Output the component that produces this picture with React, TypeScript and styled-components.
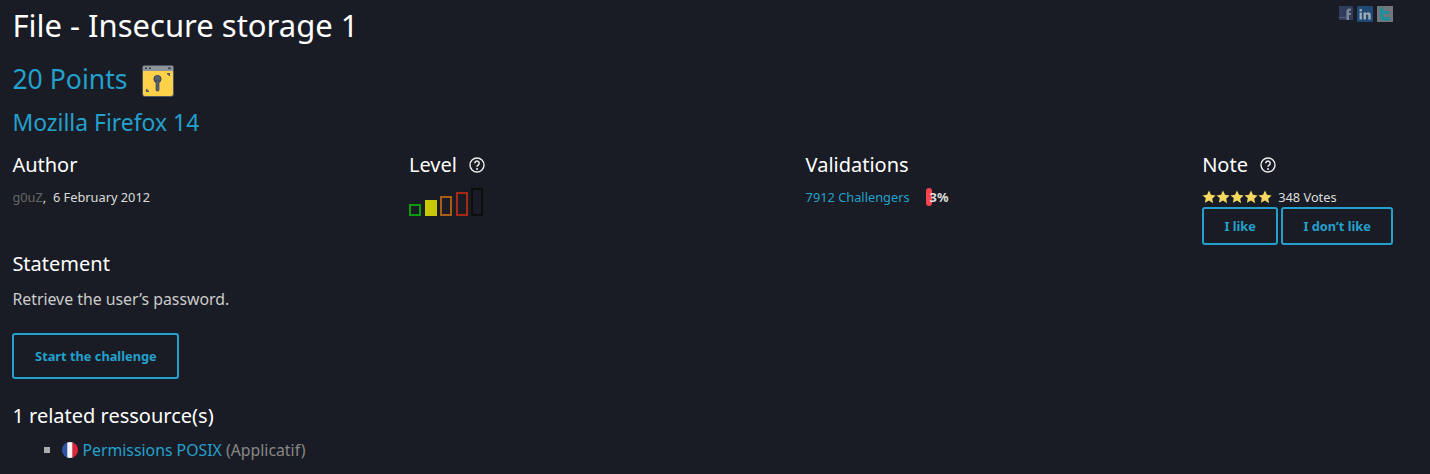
import styled, { createGlobalStyle } from "styled-components";

const GlobalStyle = createGlobalStyle`
  html, body {
    margin: 0;
    padding: 0;
    background: #191c24;
    color: #ddd;
    font-family: "Noto Sans", "Open Sans", sans-serif;
  }
`;

const HelpIcon = () => (
  <Help viewBox="0 0 16 16">
    <circle cx="8" cy="8" r="7" fill="none" stroke="#eee" strokeWidth="1.4" />
    <path d="M5.8 6.3a2.2 2.2 0 1 1 3.4 1.8c-.8.5-1.200.9-1.200 1.700" fill="none" stroke="#eee" strokeWidth="1.500" />
    <circle cx="8" cy="11.900" r="1" fill="#eee" />
  </Help>
);

const KeyBox = () => (
  <KeySvg width="32" height="32" viewBox="0 0 32 32">
    <rect x="0.5" y="0.5" width="31" height="31" rx="2.5" fill="#ffd04a" stroke="#4b5563" />
    <rect x="1" y="1" width="30" height="5" fill="#8d929b" />
    <rect x="3" y="2.5" width="2" height="1.5" fill="#3d4450" />
    <rect x="7" y="2.5" width="2" height="1.5" fill="#3d4450" />
    <rect x="26" y="2.5" width="3" height="1.5" fill="#3d4450" />
    <circle cx="15.5" cy="14" r="3.6" fill="#566274" stroke="#39414e" />
    <rect x="14" y="15" width="3" height="11" rx="1" fill="#566274" stroke="#39414e" strokeWidth=".7" />
    <path d="M25 8h3v3h-1.500V9.500H25z" fill="#4b5563" />
    <path d="M4 24h1.500v1.500H7V27H4z" fill="#4b5563" />
  </KeySvg>
);

const Flag = () => (
  <svg width="16" height="16" viewBox="0 0 16 16">
    <clipPath id="flag">
      <circle cx="8" cy="8" r="8" />
    </clipPath>
    <g clipPath="url(#flag)">
      <rect width="6" height="16" fill="#2f55a4" />
      <rect x="5.300" width="5.400" height="16" fill="#f4f4f4" />
      <rect x="10.500" width="5.500" height="16" fill="#e0243c" />
    </g>
  </svg>
);

const Star = () => (
  <svg width="14" height="14" viewBox="0 0 24 24">
    <path d="M12 1l3.400 7.300 7.900 1-5.800 5.500 1.500 7.900L12 18l-7 3.700 1.500-7.900L.7 9.300l7.900-1z" fill="#f5d85f" />
  </svg>
);

const FacebookMark = () => (
  <svg width="14" height="14" viewBox="0 0 14 14">
    <rect width="14" height="14" fill="#2f3c5e" />
    <path d="M7.500 14V5.500c0-2 1-3 3-3h1.500v2h-1c-.8 0-1 .3-1 1V7H12v2H10v5z" fill="#7f8795" />
    <rect y="11" width="7" height="1" fill="#56607a" />
  </svg>
);

const LinkedinMark = () => (
  <svg width="16" height="16" viewBox="0 0 16 16">
    <rect width="16" height="16" rx="1" fill="#1f4a75" />
    <rect x="2.500" y="3" width="2.400" height="2.400" fill="#9fa9b4" />
    <rect x="2.500" y="6.500" width="2.400" height="7" fill="#9fa9b4" />
    <path d="M6.500 6.500H9v1c.5-.8 1.300-1.200 2.200-1.200 1.700 0 2.500 1 2.500 2.900v4.300h-2.400V9.800c0-1-.4-1.400-1.100-1.400S9 8.900 9 9.800v3.700H6.500z" fill="#9fa9b4" />
  </svg>
);

const TwitterMark = () => (
  <svg width="16" height="16" viewBox="0 0 16 16">
    <rect width="16" height="16" fill="#70767a" />
    <path d="M3 1.500h3.200v3.500H12v3H6.200v1.500c0 1 .5 1.500 1.500 1.500H13v3.500H6.500C4 14 3 12.500 3 10.500z" fill="#1e8d9f" />
  </svg>
);

const App = () => {
  return (
    <>
      <GlobalStyle />
      <Page>
        <Share>
          <FacebookMark />
          <LinkedinMark />
          <TwitterMark />
        </Share>
        <Title>File - Insecure storage 1</Title>
        <Points>
          20 Points
          <KeyBox />
        </Points>
        <Platform>Mozilla Firefox 14</Platform>

        <Columns>
          <Column>
            <Heading>Author</Heading>
            <Meta>
              <Muted>g0uZ</Muted>,&nbsp; 6 February 2012
            </Meta>
          </Column>
          <Column>
            <Heading>
              Level <HelpIcon />
            </Heading>
            <Bars>
              <Bar $h={12} $color="#0a9a0a" />
              <Bar $h={16} $color="#c8c808" $fill />
              <Bar $h={20} $color="#a85c14" />
              <Bar $h={24} $color="#a82a14" />
              <Bar $h={28} $color="#0d0d0d" />
            </Bars>
          </Column>
          <Column>
            <Heading>Validations</Heading>
            <Meta>
              <Link>7912 Challengers</Link>
              <Pill />
              <Percent>3%</Percent>
            </Meta>
          </Column>
          <Column>
            <Heading>
              Note <HelpIcon />
            </Heading>
            <Votes>
              <Stars>
                <Star />
                <Star />
                <Star />
                <Star />
                <Star />
              </Stars>
              348 Votes
            </Votes>
            <Buttons>
              <Button $width={76}>I like</Button>
              <Button $width={112}>I don’t like</Button>
            </Buttons>
          </Column>
        </Columns>

        <Statement>Statement</Statement>
        <Body>Retrieve the user’s password.</Body>
        <StartButton>Start the challenge</StartButton>

        <Related>1 related ressource(s)</Related>
        <List>
          <Item>
            <Flag />
            <ItemLink>Permissions POSIX</ItemLink>
            <Kind>(Applicatif)</Kind>
          </Item>
        </List>
      </Page>
    </>
  );
};

export default App;

const Page = styled.div`
  position: relative;
  height: 474px;
  padding: 0 12.4px;
  box-sizing: border-box;
  overflow: hidden;
`;

const Share = styled.div`
  position: absolute;
  top: 6px;
  right: 37px;
  display: flex;
  gap: 4px;
  align-items: flex-start;
`;

const Title = styled.h1`
  margin: 0;
  padding-top: 6px;
  height: 39px;
  font-size: 31px;
  line-height: 39px;
  font-weight: 400;
  color: #fff;
`;

const Points = styled.h2`
  display: flex;
  align-items: center;
  gap: 14px;
  margin: 0;
  padding-top: 15px;
  height: 39px;
  font-size: 26.6px;
  line-height: 39px;
  font-weight: 400;
  color: #24a0cd;
`;

const KeySvg = styled.svg`
  margin-top: 2px;
`;

const Platform = styled.h3`
  margin: 0;
  padding-top: 8px;
  height: 32px;
  font-size: 22.9px;
  line-height: 32px;
  font-weight: 400;
  color: #24a0cd;
`;

const Columns = styled.div`
  display: grid;
  grid-template-columns: repeat(4, 396.6px);
  margin-top: 12px;
  height: 99px;
`;

const Column = styled.div`
  display: flex;
  flex-direction: column;
  align-items: flex-start;
`;

const Heading = styled.h4`
  display: flex;
  align-items: center;
  gap: 12px;
  margin: 0;
  height: 28px;
  font-size: 20px;
  line-height: 28px;
  font-weight: 400;
  color: #fff;
`;

const Help = styled.svg`
  width: 16px;
  height: 16px;
`;

const Meta = styled.div`
  display: flex;
  align-items: center;
  margin-top: 9px;
  height: 18px;
  font-size: 12.8px;
  line-height: 18px;
  color: #ddd;
  white-space: pre;
`;

const Muted = styled.span`
  color: #666;
`;

const Link = styled.span`
  color: #24a0cd;
`;

const Pill = styled.span`
  width: 6px;
  height: 18px;
  margin-left: 16px;
  border-radius: 3px;
  background: #f9444e;
`;

const Percent = styled.span`
  margin-left: -2px;
  font-weight: 700;
  color: #ddd;
`;

const Bars = styled.div`
  display: flex;
  align-items: flex-end;
  gap: 3.6px;
  margin-top: 9px;
  height: 28px;
`;

const Bar = styled.span<{ $h: number; $color: string; $fill?: boolean }>`
  box-sizing: border-box;
  width: 12px;
  height: ${(p) => p.$h}px;
  border: 2px solid ${(p) => p.$color};
  background: ${(p) => (p.$fill ? p.$color : "transparent")};
`;

const Votes = styled.div`
  display: flex;
  align-items: center;
  gap: 6px;
  margin-top: 9px;
  height: 18px;
  font-size: 12.8px;
  line-height: 18px;
  color: #ddd;
`;

const Stars = styled.span`
  display: flex;
`;

const Buttons = styled.div`
  display: flex;
  gap: 3px;
  margin-top: 1px;
`;

const Button = styled.div<{ $width: number }>`
  box-sizing: border-box;
  width: ${(p) => p.$width}px;
  height: 38px;
  border: 2px solid #24a0cd;
  border-radius: 3px;
  font-size: 12.8px;
  font-weight: 700;
  line-height: 34px;
  text-align: center;
  color: #24a0cd;
`;

const Statement = styled.h4`
  margin: 0;
  height: 28px;
  font-size: 20px;
  line-height: 28px;
  font-weight: 400;
  color: #fff;
`;

const Body = styled.p`
  margin: 10px 0 0;
  height: 22px;
  font-size: 15.84px;
  line-height: 22px;
  color: #ccc;
`;

const StartButton = styled.div`
  box-sizing: border-box;
  width: 167px;
  height: 46px;
  margin-top: 23px;
  border: 2px solid #24a0cd;
  border-radius: 3px;
  font-size: 12.8px;
  font-weight: 700;
  line-height: 42px;
  text-align: center;
  color: #24a0cd;
`;

const Related = styled.h4`
  margin: 23px 0 0;
  height: 28px;
  font-size: 20px;
  line-height: 28px;
  font-weight: 400;
  color: #fff;
`;

const List = styled.ul`
  margin: 9px 0 0;
  padding: 0 0 0 32px;
  list-style: none;
`;

const Item = styled.li`
  display: flex;
  align-items: center;
  gap: 4px;
  height: 22px;
  font-size: 15.84px;
  line-height: 22px;

  &::before {
    content: "";
    width: 6px;
    height: 6px;
    margin-right: 8px;
    background: #aaa;
  }
`;

const ItemLink = styled.span`
  color: #24a0cd;
`;

const Kind = styled.span`
  color: #888;
`;
